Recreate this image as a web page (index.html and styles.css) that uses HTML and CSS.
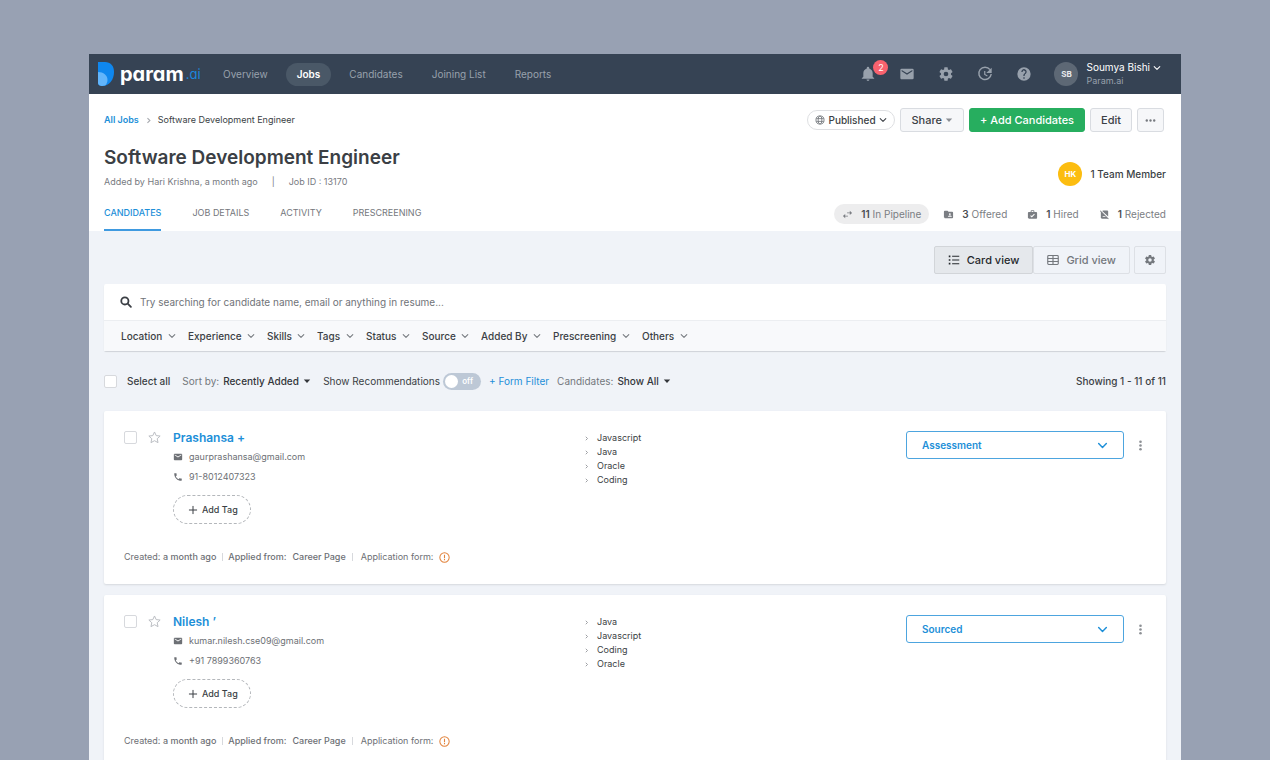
FILE: index.html
```html
<!DOCTYPE html>
<html lang="en">
<head>
  <meta charset="UTF-8">
  <meta name="viewport" content="width=device-width, initial-scale=1.0">
  <title>Software Development Engineer - Param.ai</title>
  <link rel="stylesheet" href="styles.css">
</head>
<body>
  <!-- icon sprite -->
  <svg class="sprite" width="0" height="0" aria-hidden="true">
    <symbol id="i-down" viewBox="0 0 10 10"><path d="M1.500 3.200 5 6.800 8.500 3.200" fill="none" stroke="currentColor" stroke-width="1.300" stroke-linecap="round" stroke-linejoin="round"/></symbol>
    <symbol id="i-caret" viewBox="0 0 10 10"><path d="M1 3h8L5 7.500z"/></symbol>
    <symbol id="i-right" viewBox="0 0 10 10"><path d="M3.500 1.500 7 5 3.500 8.500" fill="none" stroke="currentColor" stroke-width="1.600"/></symbol>
    <symbol id="i-bell" viewBox="0 0 24 24"><path d="M12 22.500c1.200 0 2.200-1 2.200-2.200H9.800c0 1.200 1 2.200 2.200 2.200zM19 16v-5.500c0-3.300-2.100-6.100-5.200-6.900V2.800a1.800 1.800 0 0 0-3.600 0v.8C7.100 4.400 5 7.200 5 10.500V16l-2.300 2.200v1.100h18.600v-1.100z"/></symbol>
    <symbol id="i-mail" viewBox="0 0 24 24"><path d="M20 4H4a2 2 0 0 0-2 2v12c0 1.100.9 2 2 2h16a2 2 0 0 0 2-2V6a2 2 0 0 0-2-2zm0 4-8 5-8-5V6l8 5 8-5z"/></symbol>
    <symbol id="i-gear" viewBox="0 0 24 24"><path d="M19.430 12.980c.04-.32.07-.64.07-.98s-.03-.66-.07-.98l2.110-1.650c.19-.15.24-.42.12-.64l-2-3.460c-.12-.22-.39-.3-.61-.22l-2.490 1a7.300 7.300 0 0 0-1.690-.98l-.38-2.650A.49.490 0 0 0 14 2h-4c-.25 0-.46.180-.49.420l-.38 2.650c-.61.250-1.170.590-1.690.980l-2.490-1c-.23-.09-.49 0-.61.220l-2 3.460c-.13.220-.07.490.12.640l2.110 1.650c-.04.320-.07.650-.07.980s.03.660.07.980l-2.110 1.650c-.19.150-.24.420-.12.640l2 3.460c.12.220.39.300.61.220l2.490-1c.52.400 1.080.730 1.690.980l.38 2.650c.03.240.24.420.49.420h4c.25 0 .46-.18.49-.42l.38-2.650c.61-.25 1.170-.59 1.690-.98l2.490 1c.23.090.49 0 .61-.22l2-3.460c.12-.22.070-.49-.12-.64zM12 15.500a3.500 3.500 0 1 1 0-7 3.500 3.500 0 0 1 0 7z"/></symbol>
    <symbol id="i-clock" viewBox="0 0 24 24"><path d="M19.500 5.500A9.300 9.300 0 1 0 21.300 12" fill="none" stroke="currentColor" stroke-width="2.200"/><path d="M22 2.500v8h-8z"/><path d="M11.600 7.500v5.200l4 2.300" fill="none" stroke="currentColor" stroke-width="1.800"/></symbol>
    <symbol id="i-help" viewBox="0 0 24 24"><path d="M12 2a10 10 0 1 0 0 20 10 10 0 0 0 0-20zm1 17h-2v-2h2zm2.070-7.750-.9.920C13.450 12.900 13 13.500 13 15h-2v-.5c0-1.100.45-2.100 1.170-2.830l1.240-1.260A2 2 0 1 0 10 9H8a4 4 0 1 1 7.070 2.250z"/></symbol>
    <symbol id="i-globe" viewBox="0 0 16 16"><g fill="none" stroke="currentColor" stroke-width="1.400"><circle cx="8" cy="8" r="6.500"/><ellipse cx="8" cy="8" rx="3" ry="6.500"/><path d="M2 5.800h12M2 10.200h12"/></g></symbol>
    <symbol id="i-dots" viewBox="0 0 16 16"><circle cx="2.600" cy="8" r="1.700"/><circle cx="8" cy="8" r="1.700"/><circle cx="13.400" cy="8" r="1.700"/></symbol>
    <symbol id="i-kebab" viewBox="0 0 16 16"><circle cx="8" cy="2.500" r="1.900"/><circle cx="8" cy="8" r="1.900"/><circle cx="8" cy="13.500" r="1.900"/></symbol>
    <symbol id="i-swap" viewBox="0 0 24 24"><path d="M17 4v3.500h-6v2h6V13l5-4.500zM7 11v3.500h6v2H7V20l-5-4.500z"/></symbol>
    <symbol id="i-folder" viewBox="0 0 24 24"><path d="M20 6h-8l-2-2H4a2 2 0 0 0-2 2v12c0 1.100.9 2 2 2h16a2 2 0 0 0 2-2V8a2 2 0 0 0-2-2zm-5 3a2 2 0 1 1 0 4 2 2 0 0 1 0-4zm4 8h-8v-1c0-1.300 2.700-2 4-2s4 .7 4 2z"/></symbol>
    <symbol id="i-hired" viewBox="0 0 24 24"><path d="M20 6.500h-4V4.500a2 2 0 0 0-2-2h-4a2 2 0 0 0-2 2v2H4a2 2 0 0 0-2 2V19c0 1.100.9 2 2 2h16a2 2 0 0 0 2-2V8.500a2 2 0 0 0-2-2zm-10-2h4v2h-4zm.5 14L7 15l1.500-1.500 2 2 5-5L17 12z"/></symbol>
    <symbol id="i-rejected" viewBox="0 0 24 24"><path d="M9 3h9a2 2 0 0 1 2 2v11.500L7 4.500zM3.300 3 2 4.300 4 6.300V19c0 1.100.9 2 2 2h12.700l1.300 1.300 1.300-1.300zM8 17v-2h5l2 2z"/></symbol>
    <symbol id="i-list" viewBox="0 0 16 16"><path d="M1 2h2.200v2.200H1zM1 6.900h2.200v2.200H1zM1 11.800h2.200V14H1zM5.500 2.400H15v1.400H5.500zM5.500 7.300H15v1.400H5.500zM5.500 12.200H15v1.400H5.500z"/></symbol>
    <symbol id="i-grid" viewBox="0 0 16 16"><g fill="none" stroke="currentColor" stroke-width="1.500"><rect x="1" y="2" width="14" height="12" rx="1.200"/><path d="M1 6h14M1 10h14M8 2v12"/></g></symbol>
    <symbol id="i-search" viewBox="0 0 16 16"><g fill="none" stroke="currentColor" stroke-width="2.400" stroke-linecap="round"><circle cx="6.500" cy="6.500" r="4.800"/><path d="m10.300 10.300 4.200 4.200"/></g></symbol>
    <symbol id="i-star" viewBox="0 0 24 24"><path d="m12 1.800 3.100 6.700 7.300.8-5.400 5 1.500 7.200L12 17.900l-6.500 3.600L7 14.300l-5.400-5 7.300-.8z" fill="none" stroke="currentColor" stroke-width="1.800" stroke-linejoin="round"/></symbol>
    <symbol id="i-phone" viewBox="0 0 24 24"><path d="M20 15.500c-1.200 0-2.400-.2-3.600-.6-.3-.1-.7 0-1 .2l-2.200 2.200a15 15 0 0 1-6.600-6.600l2.200-2.200c.3-.3.4-.7.200-1C8.700 6.500 8.500 5.200 8.500 4c0-.6-.4-1-1-1H4c-.6 0-1 .4-1 1 0 9.400 7.600 17 17 17 .6 0 1-.4 1-1v-3.500c0-.6-.4-1-1-1z"/></symbol>
    <symbol id="i-plus" viewBox="0 0 16 16"><path d="M8 1.500v13M1.500 8h13" stroke="currentColor" stroke-width="1.600"/></symbol>
    <symbol id="i-alert" viewBox="0 0 16 16"><circle cx="8" cy="8" r="6.800" fill="none" stroke="currentColor" stroke-width="1.500"/><path d="M7.200 4h1.600v5H7.200zM7.200 10.300h1.600V12H7.200z"/></symbol>
  </svg>

  <div class="app">
    <header class="topbar">
      <a class="logo" href="#">
        <svg class="logo-mark" viewBox="0 0 16 24" aria-hidden="true">
          <path d="M0 0h7c5.500 0 9 3.800 9 10 0 8-5 14-12 14-2 0-4-1-4-3z" fill="#0f87ee"/>
          <path d="M0 10c5.500 0 9.500 3.500 9.500 8 0 2.200-1 4.200-2.300 5.600C6 24 5 24 4 24c-2 0-4-1-4-3z" fill="#62b5fb"/>
        </svg>
        <span class="logo-text">param</span><span class="logo-tld">.ai</span>
      </a>
      <nav class="nav">
        <a href="#">Overview</a>
        <a class="active" href="#">Jobs</a>
        <a href="#">Candidates</a>
        <a href="#">Joining List</a>
        <a href="#">Reports</a>
      </nav>
      <div class="tools">
        <button class="tool" aria-label="Notifications"><svg><use href="#i-bell"/></svg><span class="badge">2</span></button>
        <button class="tool" aria-label="Messages"><svg><use href="#i-mail"/></svg></button>
        <button class="tool" aria-label="Settings"><svg><use href="#i-gear"/></svg></button>
        <button class="tool" aria-label="History"><svg><use href="#i-clock"/></svg></button>
        <button class="tool" aria-label="Help"><svg><use href="#i-help"/></svg></button>
      </div>
      <button class="user">
        <span class="avatar">SB</span>
        <span class="user-text">
          <span class="user-name">Soumya Bishi <svg class="ico-xs"><use href="#i-down"/></svg></span>
          <span class="user-org">Param.ai</span>
        </span>
      </button>
    </header>

    <section class="job">
      <div class="job-row">
        <nav class="crumbs" aria-label="Breadcrumb">
          <a href="#">All Jobs</a>
          <svg class="crumb-sep"><use href="#i-right"/></svg>
          <span>Software Development Engineer</span>
        </nav>
        <div class="actions">
          <label class="status pick">
            <svg class="ico-s globe"><use href="#i-globe"/></svg>
            <select aria-label="Job status"><option>Published</option></select>
            <svg class="ico-xs"><use href="#i-down"/></svg>
          </label>
          <button class="btn">Share <svg class="ico-xs muted"><use href="#i-caret"/></svg></button>
          <button class="btn btn-green">+ Add Candidates</button>
          <button class="btn">Edit</button>
          <button class="btn btn-more" aria-label="More"><svg class="ico-m"><use href="#i-dots"/></svg></button>
        </div>
      </div>

      <div class="job-row job-title">
        <div>
          <h1>Software Development Engineer</h1>
          <p class="meta"><span>Added by Hari Krishna, a month ago</span><span>|</span><span>Job ID : 13170</span></p>
        </div>
        <div class="team"><span class="avatar avatar-gold">HK</span>1 Team Member</div>
      </div>

      <div class="job-row job-nav">
        <nav class="tabs">
          <a class="active" href="#">CANDIDATES</a>
          <a href="#">JOB DETAILS</a>
          <a href="#">ACTIVITY</a>
          <a href="#">PRESCREENING</a>
        </nav>
        <div class="stats">
          <a class="active" href="#"><svg class="ico-m"><use href="#i-swap"/></svg><span><b>11</b> In Pipeline</span></a>
          <a href="#"><svg class="ico-m"><use href="#i-folder"/></svg><span><b>3</b> Offered</span></a>
          <a href="#"><svg class="ico-m"><use href="#i-hired"/></svg><span><b>1</b> Hired</span></a>
          <a href="#"><svg class="ico-m"><use href="#i-rejected"/></svg><span><b>1</b> Rejected</span></a>
        </div>
      </div>
    </section>

    <main class="content">
      <div class="views">
        <div class="view-switch">
          <button class="active"><svg class="ico-l"><use href="#i-list"/></svg>Card view</button>
          <button><svg class="ico-l"><use href="#i-grid"/></svg>Grid view</button>
        </div>
        <button class="view-settings" aria-label="View settings"><svg class="ico-l"><use href="#i-gear"/></svg></button>
      </div>

      <div class="search">
        <label class="search-box">
          <svg class="ico-l"><use href="#i-search"/></svg>
          <input type="text" aria-label="Search candidates" placeholder="Try searching for candidate name, email or anything in resume...">
        </label>
        <div class="filters">
          <label class="pick"><select aria-label="Location"><option>Location</option></select><svg class="ico-xs"><use href="#i-down"/></svg></label>
          <label class="pick"><select aria-label="Experience"><option>Experience</option></select><svg class="ico-xs"><use href="#i-down"/></svg></label>
          <label class="pick"><select aria-label="Skills"><option>Skills</option></select><svg class="ico-xs"><use href="#i-down"/></svg></label>
          <label class="pick"><select aria-label="Tags"><option>Tags</option></select><svg class="ico-xs"><use href="#i-down"/></svg></label>
          <label class="pick"><select aria-label="Status"><option>Status</option></select><svg class="ico-xs"><use href="#i-down"/></svg></label>
          <label class="pick"><select aria-label="Source"><option>Source</option></select><svg class="ico-xs"><use href="#i-down"/></svg></label>
          <label class="pick"><select aria-label="Added By"><option>Added By</option></select><svg class="ico-xs"><use href="#i-down"/></svg></label>
          <label class="pick"><select aria-label="Prescreening"><option>Prescreening</option></select><svg class="ico-xs"><use href="#i-down"/></svg></label>
          <label class="pick"><select aria-label="Others"><option>Others</option></select><svg class="ico-xs"><use href="#i-down"/></svg></label>
        </div>
      </div>

      <div class="listbar">
        <label class="select-all"><input class="check" type="checkbox">Select all</label>
        <div class="sort">
          <label for="sort">Sort by:</label>
          <span class="pick"><select id="sort"><option>Recently Added</option></select><svg class="ico-xs"><use href="#i-caret"/></svg></span>
        </div>
        <label class="recommend">Show Recommendations
          <span class="switch"><input type="checkbox" role="switch"><span>off</span></span>
        </label>
        <a class="form-filter" href="#">+ Form Filter</a>
        <div class="sort">
          <label for="show">Candidates:</label>
          <span class="pick"><select id="show"><option>Show All</option></select><svg class="ico-xs"><use href="#i-caret"/></svg></span>
        </div>
        <span class="showing">Showing 1 - 11 of 11</span>
      </div>

      <article class="card">
        <div class="person">
          <input class="check" type="checkbox" aria-label="Select Prashansa">
          <button class="star" aria-label="Star Prashansa"><svg><use href="#i-star"/></svg></button>
          <div class="details">
            <a class="name" href="#">Prashansa +</a>
            <p class="contact"><svg class="ico-s"><use href="#i-mail"/></svg>gaurprashansa@gmail.com</p>
            <p class="contact"><svg class="ico-s"><use href="#i-phone"/></svg>91-8012407323</p>
            <button class="add-tag"><svg class="ico-s"><use href="#i-plus"/></svg>Add Tag</button>
          </div>
        </div>
        <ul class="skills">
          <li><svg><use href="#i-right"/></svg>Javascript</li>
          <li><svg><use href="#i-right"/></svg>Java</li>
          <li><svg><use href="#i-right"/></svg>Oracle</li>
          <li><svg><use href="#i-right"/></svg>Coding</li>
        </ul>
        <div class="stage">
          <label class="pick"><select aria-label="Stage of Prashansa"><option>Assessment</option></select><svg class="ico-m"><use href="#i-down"/></svg></label>
          <button class="kebab" aria-label="More actions"><svg class="ico-m"><use href="#i-kebab"/></svg></button>
        </div>
        <footer>
          <span>Created: <b>a month ago</b></span>
          <span><b>Applied from:</b></span>
          <span><b>Career Page</b></span>
          <span>Application form:</span>
          <svg class="ico-m alert"><use href="#i-alert"/></svg>
        </footer>
      </article>

      <article class="card">
        <div class="person">
          <input class="check" type="checkbox" aria-label="Select Nilesh">
          <button class="star" aria-label="Star Nilesh"><svg><use href="#i-star"/></svg></button>
          <div class="details">
            <a class="name" href="#">Nilesh ’</a>
            <p class="contact"><svg class="ico-s"><use href="#i-mail"/></svg>kumar.nilesh.cse09@gmail.com</p>
            <p class="contact"><svg class="ico-s"><use href="#i-phone"/></svg>+91 7899360763</p>
            <button class="add-tag"><svg class="ico-s"><use href="#i-plus"/></svg>Add Tag</button>
          </div>
        </div>
        <ul class="skills">
          <li><svg><use href="#i-right"/></svg>Java</li>
          <li><svg><use href="#i-right"/></svg>Javascript</li>
          <li><svg><use href="#i-right"/></svg>Coding</li>
          <li><svg><use href="#i-right"/></svg>Oracle</li>
        </ul>
        <div class="stage">
          <label class="pick"><select aria-label="Stage of Nilesh"><option>Sourced</option></select><svg class="ico-m"><use href="#i-down"/></svg></label>
          <button class="kebab" aria-label="More actions"><svg class="ico-m"><use href="#i-kebab"/></svg></button>
        </div>
        <footer>
          <span>Created: <b>a month ago</b></span>
          <span><b>Applied from:</b></span>
          <span><b>Career Page</b></span>
          <span>Application form:</span>
          <svg class="ico-m alert"><use href="#i-alert"/></svg>
        </footer>
      </article>
    </main>
  </div>
</body>
</html>
```

FILE: styles.css
```css
* {
  box-sizing: border-box;
}

body {
  margin: 0;
  padding: 54px 89px 0;
  background: #98a1b3;
  color: #3b3f45;
  font-family: Inter, "Liberation Sans", sans-serif;
  font-size: 10px;
  line-height: 14px;
}

h1, p, ul {
  margin: 0;
  padding: 0;
}

a {
  color: inherit;
  text-decoration: none;
}

button, select, input {
  margin: 0;
  padding: 0;
  border: 0;
  background: none;
  color: inherit;
  font: inherit;
}

button, select {
  cursor: pointer;
}

select {
  appearance: none;
}

svg {
  display: block;
  flex: none;
  fill: currentColor;
}

.sprite {
  position: absolute;
}

.ico-xs {
  width: 8px;
  height: 8px;
}

.ico-s {
  width: 10px;
  height: 10px;
}

.ico-m {
  width: 11px;
  height: 11px;
}

.ico-l {
  width: 12px;
  height: 12px;
}

.muted {
  color: #8a8e94;
}

/* select with its arrow drawn beside it */
.pick {
  display: flex;
  align-items: center;
  gap: 5px;
  font-weight: 500;
}

.pick svg {
  pointer-events: none;
}

.app {
  min-height: calc(100vh - 54px);
  background: #f0f3f8;
}

/* Top bar */
.topbar {
  display: flex;
  align-items: center;
  height: 40px;
  padding: 0 20px 0 9px;
  background: #364354;
  color: #98a1ac;
}

.logo {
  display: flex;
  align-items: center;
  width: 114px;
  color: #fff;
}

.logo-mark {
  width: 16px;
  height: 24px;
  margin-right: 6px;
}

.logo-text {
  margin-right: 2px;
  font-size: 20px;
  font-weight: 700;
  line-height: 24px;
  font-feature-settings: "cv11";
}

.logo-tld {
  color: #1b86dd;
  font-size: 13px;
  line-height: 24px;
  font-feature-settings: "cv11";
}

.nav {
  display: flex;
  gap: 7px;
}

.nav a {
  padding: 4px 11px;
  border-radius: 12px;
  line-height: 15px;
}

.nav .active {
  background: #4a5867;
  color: #fff;
  font-weight: 600;
}

.tools {
  display: flex;
  gap: 23px;
  margin-left: auto;
}

.tool {
  position: relative;
}

.tool svg {
  width: 16px;
  height: 16px;
}

.badge {
  position: absolute;
  top: -6px;
  right: -12px;
  width: 15px;
  border-radius: 8px;
  background: #f9626e;
  color: #fff;
  font-size: 9px;
  line-height: 15px;
}

.user {
  display: flex;
  align-items: center;
  gap: 8px;
  margin-left: 22px;
  text-align: left;
}

.avatar {
  width: 24px;
  border-radius: 50%;
  background: #5d6875;
  color: #e8eaed;
  font-size: 8px;
  font-weight: 700;
  line-height: 24px;
  text-align: center;
}

.user-text {
  line-height: 13px;
}

.user-name {
  display: flex;
  align-items: center;
  gap: 3px;
  color: #fff;
}

.user-org {
  font-size: 9px;
}

/* Job header */
.job {
  padding: 14px 15px 0;
  background: #fff;
}

.job-row {
  display: flex;
  justify-content: space-between;
}

.crumbs {
  display: flex;
  align-items: center;
  gap: 6px;
  font-size: 9px;
}

.crumbs a {
  color: #1d8fd8;
  font-weight: 600;
}

.crumb-sep {
  width: 7px;
  height: 7px;
  color: #a8abb0;
}

.actions {
  display: flex;
  align-items: center;
  gap: 5px;
  padding-right: 2px;
}

.status {
  gap: 3px;
  height: 20px;
  padding: 0 7px;
  border: 1px solid #dedfe2;
  border-radius: 10px;
}

.globe {
  color: #777b80;
}

.btn {
  display: flex;
  align-items: center;
  gap: 3px;
  height: 24px;
  padding: 0 10px;
  border: 1px solid #d9dce1;
  border-radius: 3px;
  background: #f6f7f9;
  font-size: 11px;
  font-weight: 500;
}

.btn-green {
  border-color: #27ae5f;
  background: #27ae5f;
  color: #fff;
}

.btn-more {
  padding: 0 7px;
  color: #75797e;
}

.job-title {
  align-items: flex-end;
  padding-top: 14px;
}

h1 {
  font-size: 19px;
  font-weight: 600;
  line-height: 24px;
}

.meta {
  display: flex;
  gap: 14px;
  margin-top: 5px;
  color: #777a7f;
  font-size: 9px;
}

.team {
  display: flex;
  align-items: center;
  gap: 8px;
  padding-bottom: 3px;
  font-weight: 500;
}

.avatar-gold {
  background: #fcbd10;
  color: #fff;
}

.job-nav {
  align-items: center;
  padding-top: 8px;
}

.tabs {
  display: flex;
  gap: 31px;
  color: #74777c;
  font-size: 9px;
}

.tabs a {
  padding: 9px 0;
  border-bottom: 2px solid transparent;
}

.tabs .active {
  border-color: #3f9ae0;
  color: #1d8fd8;
  font-weight: 500;
}

.stats {
  display: flex;
  gap: 20px;
  color: #7b7e83;
}

.stats a {
  display: flex;
  align-items: center;
  gap: 8px;
}

.stats b {
  color: #4a4d52;
  font-weight: 600;
}

.stats .active {
  height: 20px;
  margin-right: -6px;
  padding: 0 8px;
  border-radius: 10px;
  background: #ededee;
}

/* List */
.content {
  padding: 15px;
}

.views {
  display: flex;
  justify-content: flex-end;
  gap: 4px;
}

.view-switch {
  display: flex;
}

.view-switch button,
.view-settings {
  display: flex;
  align-items: center;
  gap: 7px;
  height: 28px;
  padding: 0 13px;
  border: 1px solid #dde0e5;
  border-radius: 2px;
  color: #74787d;
  font-size: 11px;
  font-weight: 500;
}

.view-settings {
  padding: 0 9px;
}

.view-switch .active {
  border-color: #d2d5d9;
  background: #e5e8ec;
  color: #25282c;
}

.search {
  margin-top: 10px;
  border-radius: 2px;
  background: #fff;
  box-shadow: 0 1px 1px #cfd2d7;
}

.search-box {
  display: flex;
  align-items: center;
  gap: 8px;
  height: 36px;
  padding: 0 16px;
}

.search-box input {
  flex: 1;
  outline: 0;
}

.search-box input::placeholder {
  color: #707378;
  opacity: 1;
}

.filters {
  display: flex;
  gap: 12px;
  height: 31px;
  padding: 0 17px;
  border-top: 1px solid #eceef1;
  background: #f8f9fb;
}

.filters svg {
  color: #75797e;
}

.listbar {
  display: flex;
  align-items: center;
  gap: 8px;
  height: 60px;
}

.check {
  appearance: none;
  width: 13px;
  height: 13px;
  border: 1px solid #d7d9dd;
  border-radius: 2px;
  background: #fff;
}

.check:checked {
  background: #1d8fd8;
}

.select-all {
  display: flex;
  align-items: center;
  gap: 10px;
  margin-right: 4px;
  font-weight: 500;
}

.sort {
  display: flex;
  gap: 4px;
  color: #74787d;
}

.sort .pick {
  gap: 4px;
  color: #33363b;
}

.recommend {
  display: flex;
  align-items: center;
  gap: 3px;
  margin-left: 4px;
}

.switch {
  display: flex;
  align-items: center;
  justify-content: space-between;
  width: 38px;
  height: 17px;
  padding: 0 8px 0 2px;
  border-radius: 9px;
  background: #bdc8d6;
  color: #fff;
  font-size: 8px;
  font-weight: 600;
}

.switch input {
  appearance: none;
  width: 13px;
  height: 13px;
  border-radius: 50%;
  background: #fff;
}

.form-filter {
  color: #1d8fd8;
}

.showing {
  margin-left: auto;
  font-weight: 500;
}

/* Candidate card */
.card {
  display: grid;
  grid-template-columns: 460fr 322fr 240fr;
  margin-bottom: 11px;
  padding: 20px;
  border-radius: 2px;
  background: #fff;
  box-shadow: 0 1px 2px #d5d8de;
}

.person {
  display: flex;
  align-items: flex-start;
}

.person .check {
  margin: 0 11px 0 0;
}

.star {
  margin-right: 12px;
  color: #b9bcc1;
}

.star svg {
  width: 13px;
  height: 13px;
}

.details {
  display: flex;
  flex-direction: column;
  align-items: flex-start;
}

.name {
  margin-bottom: 4px;
  color: #1d8fd8;
  font-size: 12px;
  font-weight: 600;
}

.contact {
  display: flex;
  align-items: center;
  gap: 6px;
  margin-bottom: 5px;
  color: #6d7075;
  font-size: 9px;
  line-height: 15px;
}

.add-tag {
  display: flex;
  align-items: center;
  gap: 4px;
  height: 29px;
  margin-top: 6px;
  padding: 0 12px 0 14px;
  border: 1px dashed #b4b7bb;
  border-radius: 15px;
  font-size: 9px;
  font-weight: 500;
}

.skills {
  list-style: none;
  font-size: 9px;
}

.skills li {
  display: flex;
  align-items: center;
  gap: 8px;
}

.skills svg {
  width: 5px;
  height: 5px;
  color: #85888d;
}

.stage {
  display: flex;
  justify-content: space-between;
  height: 28px;
}

.stage .pick {
  display: grid;
  flex: 1;
  margin-right: 11px;
  border: 1px solid #4da5df;
  border-radius: 3px;
  color: #1d8fd8;
  font-weight: 600;
}

.stage select {
  grid-area: 1 / 1;
  height: 26px;
  padding: 0 15px;
}

.stage .pick svg {
  grid-area: 1 / 1;
  justify-self: end;
  margin-right: 15px;
}

.kebab {
  color: #8d9095;
}

.card footer {
  display: flex;
  grid-column: 1 / -1;
  align-items: center;
  gap: 6px;
  margin-top: 26px;
  color: #6d7075;
  font-size: 9px;
}

.card footer b {
  font-weight: 500;
}

.card footer span:nth-child(2) {
  padding-left: 5px;
  border-left: 1px solid #d7d9dd;
  line-height: 8px;
}

.card footer span:nth-child(4) {
  padding-left: 8px;
  border-left: 1px solid #d7d9dd;
  line-height: 8px;
}

.alert {
  color: #e2833c;
}
```
